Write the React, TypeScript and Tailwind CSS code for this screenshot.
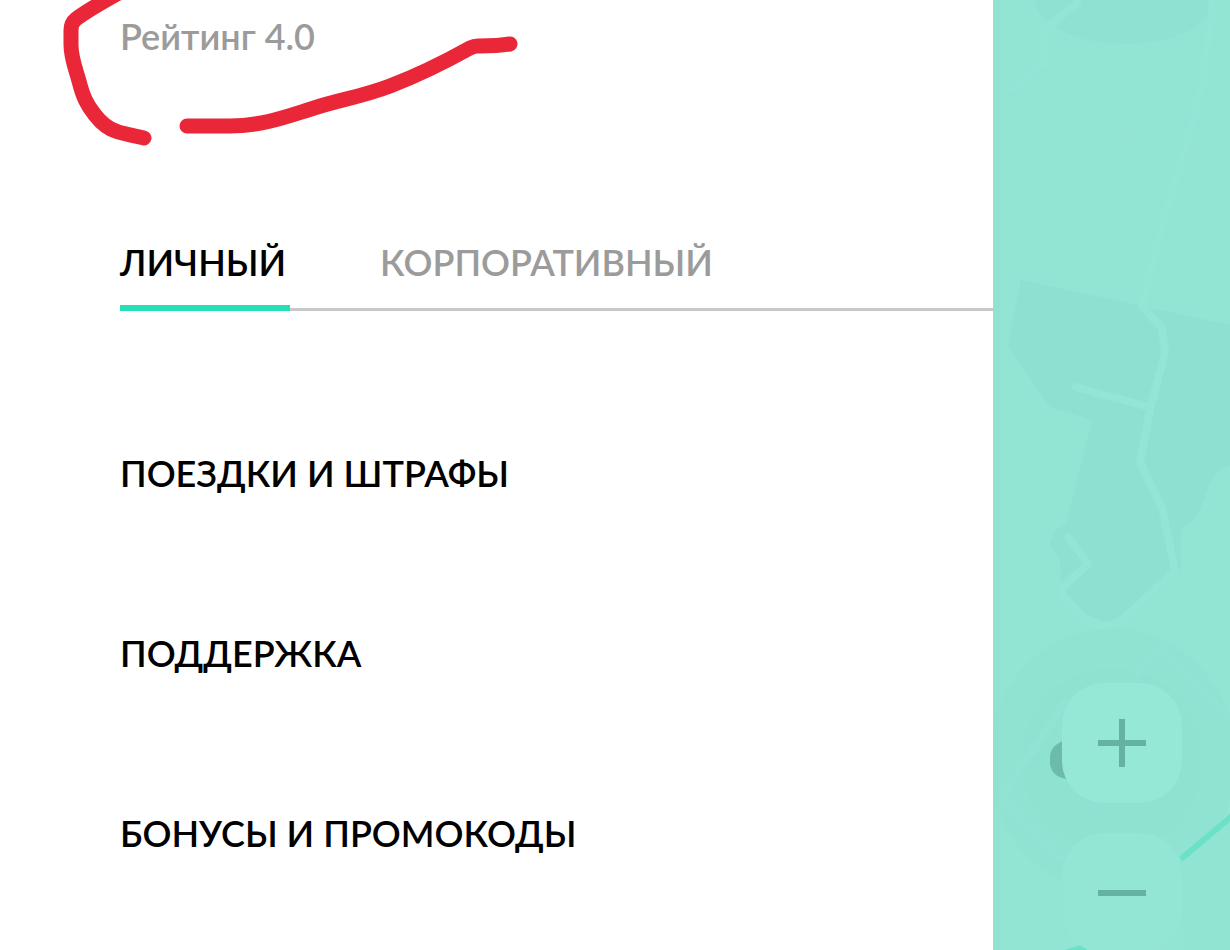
import React, { useState } from "react";

interface Tab {
  id: string;
  label: string;
}

const tabs: Tab[] = [
  { id: "personal", label: "ЛИЧНЫЙ" },
  { id: "corporate", label: "КОРПОРАТИВНЫЙ" },
];

const menu = [
  { href: "#trips", label: "ПОЕЗДКИ И ШТРАФЫ" },
  { href: "#support", label: "ПОДДЕРЖКА" },
  { href: "#bonuses", label: "БОНУСЫ И ПРОМОКОДЫ" },
];

// Красная пометка от руки вокруг рейтинга
const Marker: React.FC = () => (
  <svg
    className="pointer-events-none absolute top-0 left-0"
    width="540"
    height="160"
    fill="none"
    stroke="#ea2639"
    strokeWidth="15"
    strokeLinecap="round"
    strokeLinejoin="round"
    aria-hidden="true"
  >
    <path d="M124 -10C104 1 88 10 76 19Q71 23 71 30V45C71 58 76 70 79 81C83 97 87 105 95 115C102 124 108 129 117 131.500Q121 133 144 138" />
    <path d="M187 126H230C262 126 288 116 314 108C342 99 361 97 390 86C424 73 452 58 470 48Q475 45.500 479 46C490 46 499 46 510 44" />
  </svg>
);

// Карта под бирюзовой подложкой
const MapBackground: React.FC = () => (
  <svg
    className="h-full w-full"
    viewBox="993 0 237 950"
    preserveAspectRatio="xMinYMin slice"
    aria-hidden="true"
  >
    <rect x="993" width="237" height="950" fill="#92e4d3" />
    <ellipse cx="1125" cy="-2" rx="90" ry="46" fill="#8fe2d1" />
    <path
      d="M1021 280L1230 325V465C1208 472 1208 492 1200 509L1195 518L1181 529V568L1130 615L1104 628L1078 619L1062 597L1060 560L1050 543L1056 530L1066 524L1092 420L1050 407L1008 346Z"
      fill="#8ee1d1"
    />
    <ellipse cx="1112" cy="760" rx="124" ry="132" fill="#90e3d1" />
    <ellipse cx="1112" cy="760" rx="90" ry="92" fill="#8ee2d0" />
    <path d="M1182 850L1230 815V950H1182Z" fill="#91e4d1" />
    <g fill="none" stroke="#93e5d4" strokeWidth="8" strokeLinejoin="round">
      <path d="M1080 0L1046 29V62L1010 92M1213 0L1203 82L1186 145L1165 215L1148 280L1142 306L1162 328L1165 352L1151 406L1140 462L1162 508L1175 571L1120 622L1103 626L1083 617L1062 595L1063 587L1088 564L1066 534" />
      <path d="M1072 386L1149 407" />
      <path
        d="M1135 676L1160 646L1230 720M1066 701L1001 798L1062 860M993 930L1060 905"
        strokeOpacity="0.6"
      />
    </g>
    <path
      d="M997 128L1060 128L1230 157"
      fill="none"
      stroke="#95e6d5"
      strokeOpacity="0.4"
      strokeWidth="5"
    />
    {/* Тень от края меню */}
    <rect x="993" width="7" height="950" fill="#8ce4d0" fillOpacity="0.5" />
    <path d="M1066 740Q1050 745 1050 757V764Q1052 777 1067 779Z" fill="#6dbba9" />
    <path d="M1181 859L1232 816" stroke="#6be1c5" strokeWidth="6" />
    <path d="M1064 950L1081 945L1100 960Z" fill="#6be1c5" />
  </svg>
);

const App: React.FC = () => {
  const [active, setActive] = useState("personal");

  return (
    <div className="flex h-screen overflow-hidden bg-white font-['Lato','Open_Sans',sans-serif] text-[36px] font-semibold">
      <main className="relative min-w-0 flex-1 pt-3 pl-[120px]">
        <p className="leading-[48px] text-[#9b9b9b]">Рейтинг 4.0</p>
        <Marker />

        <div
          role="tablist"
          className="mt-[180px] flex h-[71px] gap-[90px] border-b-[3px] border-[#c8c8c8]"
        >
          {tabs.map(({ id, label }) => (
            <button
              key={id}
              type="button"
              role="tab"
              aria-selected={active === id}
              onClick={() => setActive(id)}
              className={`-mb-[3px] flex min-w-[170px] border-b-[6px] leading-[44px] whitespace-nowrap ${
                active === id
                  ? "border-[#26dfb9] text-black"
                  : "border-transparent text-[#9b9b9b]"
              }`}
            >
              {label}
            </button>
          ))}
        </div>

        <nav className="mt-[72px] flex flex-col">
          {menu.map(({ href, label }) => (
            <a
              key={href}
              href={href}
              className="flex h-[180px] items-center whitespace-nowrap text-black"
            >
              {label}
            </a>
          ))}
        </nav>
      </main>

      <aside className="relative w-[237px] shrink-0 overflow-hidden bg-[#92e4d3]">
        <MapBackground />
        {/* Кнопки масштаба поверх карты */}
        <div className="absolute right-12 -bottom-[3px] flex flex-col gap-[30px]">
          <button
            type="button"
            aria-label="Увеличить"
            className="flex size-[120px] items-center justify-center rounded-[42px] bg-[#95e7d6]"
          >
            <svg width="48" height="48" stroke="#65b2a2" strokeWidth="6">
              <path d="M0 24H48M24 0V48" />
            </svg>
          </button>
          <button
            type="button"
            aria-label="Уменьшить"
            className="flex size-[120px] items-center justify-center rounded-[42px] bg-[#93e5d4]"
          >
            <svg width="48" height="48" stroke="#65b2a2" strokeWidth="6">
              <path d="M0 24H48" />
            </svg>
          </button>
        </div>
      </aside>
    </div>
  );
};

export default App;
